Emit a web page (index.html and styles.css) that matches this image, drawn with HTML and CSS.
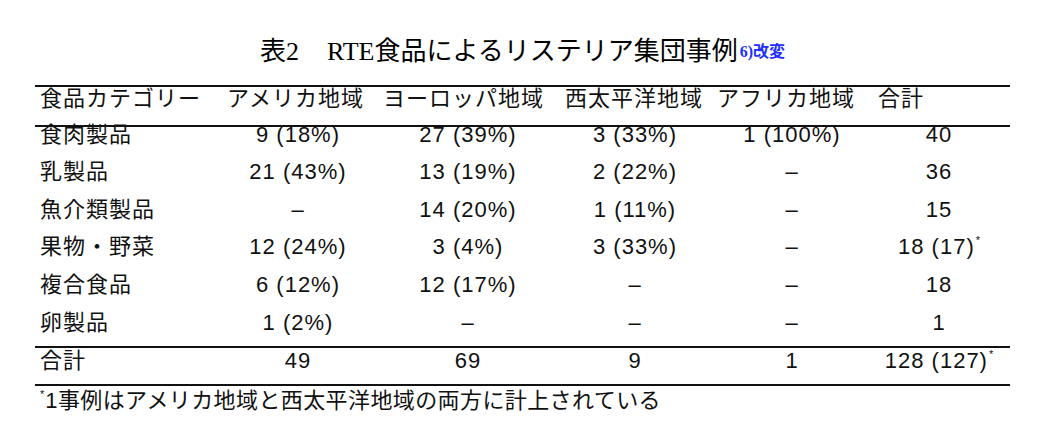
FILE: index.html
```html
<!DOCTYPE html>
<html lang="ja">
<head>
<meta charset="utf-8">
<link rel="stylesheet" href="styles.css">
</head>
<body>
<div class="page">
  <h1 class="title"><span class="t-lead">表2</span><span class="t-main">RTE食品によるリステリア集団事例</span><span class="t-ref">6)改変</span></h1>
  <table class="tbl">
    <colgroup>
      <col class="c1"><col class="c2"><col class="c3"><col class="c4"><col class="c5"><col class="c6">
    </colgroup>
    <thead>
      <tr>
        <th class="h1">食品カテゴリー</th>
        <th class="h2">アメリカ地域</th>
        <th class="h3">ヨーロッパ地域</th>
        <th class="h4">西太平洋地域</th>
        <th class="h5">アフリカ地域</th>
        <th class="h6">合計</th>
      </tr>
    </thead>
    <tbody>
      <tr><td class="cat">食肉製品</td><td>9 (18%)</td><td>27 (39%)</td><td>3 (33%)</td><td>1 (100%)</td><td>40</td></tr>
      <tr><td class="cat">乳製品</td><td>21 (43%)</td><td>13 (19%)</td><td>2 (22%)</td><td>–</td><td>36</td></tr>
      <tr><td class="cat">魚介類製品</td><td>–</td><td>14 (20%)</td><td>1 (11%)</td><td>–</td><td>15</td></tr>
      <tr><td class="cat">果物・野菜</td><td>12 (24%)</td><td>3 (4%)</td><td>3 (33%)</td><td>–</td><td>18 (17)<span class="ast">*</span></td></tr>
      <tr><td class="cat">複合食品</td><td>6 (12%)</td><td>12 (17%)</td><td>–</td><td>–</td><td>18</td></tr>
      <tr class="last"><td class="cat">卵製品</td><td>1 (2%)</td><td>–</td><td>–</td><td>–</td><td>1</td></tr>
    </tbody>
    <tfoot>
      <tr><td class="cat">合計</td><td>49</td><td>69</td><td>9</td><td>1</td><td>128 (127)<span class="ast">*</span></td></tr>
    </tfoot>
  </table>
  <p class="note"><span class="ast">*</span>1事例はアメリカ地域と西太平洋地域の両方に計上されている</p>
</div>
</body>
</html>
```
FILE: styles.css
```css
html, body {
  margin: 0;
  padding: 0;
  background: #fff;
}
.page {
  width: 1040px;
  padding: 37px 0 0 35px;
  box-sizing: border-box;
  color: #111;
  font-family: "Liberation Sans", "Noto Sans CJK JP", sans-serif;
}
.title {
  margin: 0 0 18px 0;
  width: 975px;
  height: 30px;
  overflow: visible;
  text-align: center;
  font-family: "Liberation Serif", "Noto Sans CJK JP", serif;
  font-weight: normal;
  font-size: 26px;
  line-height: 30px;
  color: #000;
  white-space: nowrap;
}
.t-lead {
  margin-right: 28px;
}
.t-ref {
  font-size: 16px;
  font-weight: bold;
  color: #1f2fff;
  position: relative;
  top: -3px;
  margin-left: 2px;
}
.tbl {
  width: 975px;
  border-collapse: collapse;
  table-layout: fixed;
  font-size: 22px;
  letter-spacing: 1px;
}
.c1 { width: 179px; }
.c2 { width: 168px; }
.c3 { width: 172px; }
.c4 { width: 162px; }
.c5 { width: 152px; }
.c6 { width: 142px; }
.tbl th, .tbl td {
  padding: 0;
  white-space: nowrap;
  box-sizing: border-box;
}
.tbl thead tr {
  border-top: 2px solid #111;
  border-bottom: 2px solid #111;
}
.tbl th {
  font-weight: normal;
  text-align: left;
  height: 40px;
  line-height: 24px;
  vertical-align: top;
}
.h1 { padding-left: 5px !important; }
.h2 { padding-left: 13px !important; }
.h3 { padding-left: 1px !important; }
.h4 { padding-left: 11px !important; }
.h5 { padding-left: 1px !important; }
.h6 { padding-left: 10px !important; }
.tbl td {
  text-align: center;
  vertical-align: top;
  height: 37.8px;
  line-height: 16px;
}
.tbl tbody tr.last td {
  height: 32px;
}
.tbl td.cat {
  text-align: left;
  padding-left: 5px;
}
.tbl tfoot tr {
  border-top: 2px solid #111;
  border-bottom: 2px solid #111;
}
.tbl tfoot td {
  height: 38px;
  padding-top: 3px;
  line-height: 20px;
}
.ast {
  font-size: 11px;
  line-height: 0;
  position: relative;
  top: -10px;
  letter-spacing: 0;
  margin-left: 1px;
}
.note {
  margin: 3px 0 0 0;
  padding-left: 5px;
  font-size: 22px;
  line-height: 24px;
  letter-spacing: 0.4px;
}
.note .ast {
  margin: 0 1px 0 0;
}
```
